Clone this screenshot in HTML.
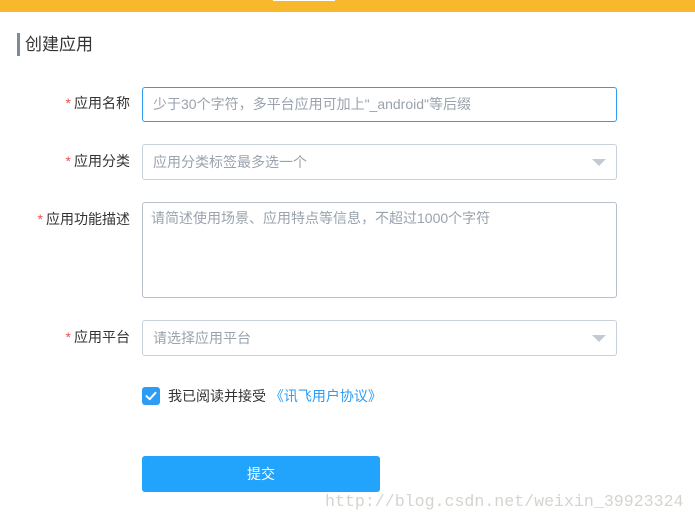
<!DOCTYPE html>
<html><head><meta charset="utf-8"><style>
body{margin:0;width:695px;height:524px;background:#fff;font-family:"Liberation Sans","Noto Sans CJK SC",sans-serif;position:relative;overflow:hidden;font-size:14px;color:#333}
.a{position:absolute}
.bar{left:0;top:0;width:695px;height:12px;background:#f7b92b}
.lbl{right:565px;text-align:right;color:#333;font-size:14px;white-space:nowrap;line-height:16px}
.lbl b{color:#f0504a;font-weight:normal;margin-right:3px}
.in{left:142px;width:475px;border:1px solid #c8d0dc;border-radius:3px;box-sizing:border-box;color:#9aa3ad;font-size:14px;padding-left:10px}
.tri{position:absolute;right:10px;top:14px;width:0;height:0;border-left:7px solid transparent;border-right:7px solid transparent;border-top:7px solid #c3c9d1}
</style></head><body>
<div class="a bar"></div>
<div class="a" style="left:273px;top:0;width:62px;height:1px;background:#fff"></div>
<div class="a" style="left:17px;top:33px;width:3px;height:23px;background:#7f8a99"></div>
<div class="a" style="left:25px;top:33px;font-size:17px;color:#333;line-height:23px">创建应用</div>

<div class="a lbl" style="top:95px"><b>*</b>应用名称</div>
<div class="a in" style="top:87px;height:35px;line-height:33px;border-color:#2d9cf5">少于30个字符，多平台应用可加上"_android"等后缀</div>

<div class="a lbl" style="top:153px"><b>*</b>应用分类</div>
<div class="a in" style="top:144px;height:36px;line-height:34px">应用分类标签最多选一个<div class="tri"></div></div>

<div class="a lbl" style="top:211px"><b>*</b>应用功能描述</div>
<div class="a in" style="top:202px;height:96px;padding-left:8px;padding-top:6px;line-height:18px;border-color:#b8c0cc">请简述使用场景、应用特点等信息，不超过1000个字符</div>

<div class="a lbl" style="top:329px"><b>*</b>应用平台</div>
<div class="a in" style="top:320px;height:36px;line-height:34px">请选择应用平台<div class="tri"></div></div>

<div class="a" style="left:142px;top:387px;width:18px;height:18px;background:#2d9cf5;border-radius:3px">
<svg width="18" height="18" viewBox="0 0 18 18"><path d="M4.5 9.2 L7.7 12.2 L13.5 5.8" stroke="#fff" stroke-width="2" fill="none" stroke-linecap="round" stroke-linejoin="round"/></svg></div>
<div class="a" style="left:168px;top:388px;line-height:16px">我已阅读并接受 <span style="color:#2d9cf5">《讯飞用户协议》</span></div>

<div class="a" style="left:142px;top:456px;width:238px;height:36px;background:#22a3fc;border-radius:3px;color:#fff;text-align:center;line-height:36px;font-size:14px">提交</div>
<div class="a" style="left:325px;top:492px;font-family:'Liberation Mono',monospace;font-size:16.6px;color:#d4d4cf;white-space:nowrap">http://blog.csdn.net/weixin_39923324</div>
</body></html>
